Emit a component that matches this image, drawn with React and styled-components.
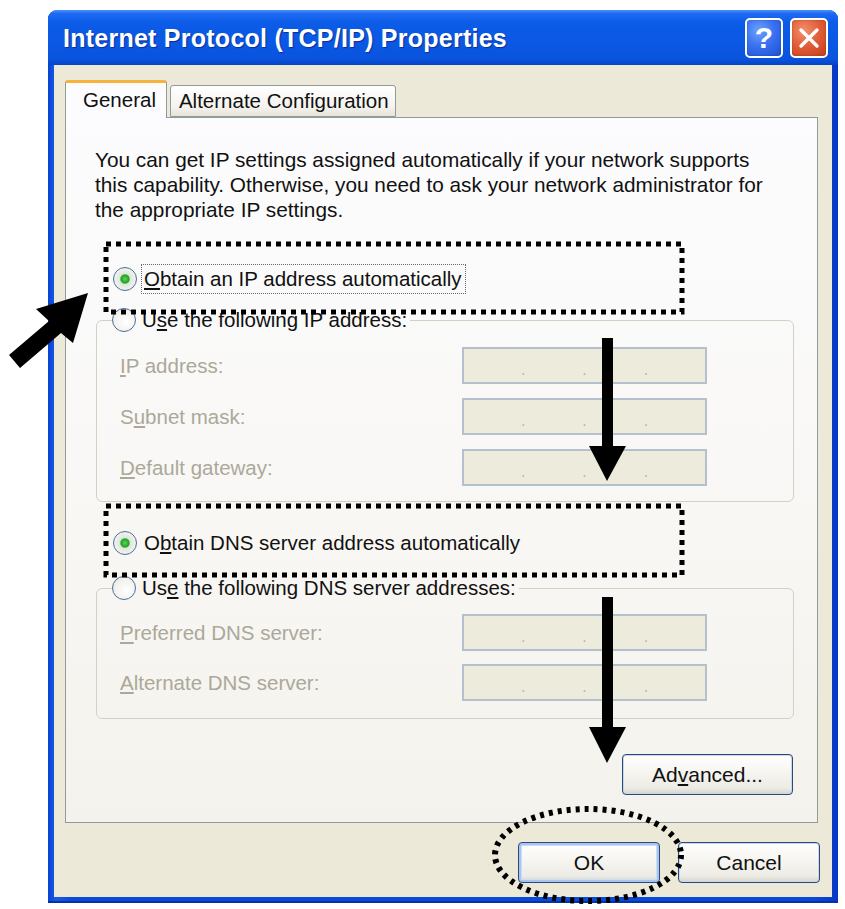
import React from 'react'
import styled, { createGlobalStyle } from 'styled-components'

const GlobalStyle = createGlobalStyle`
  html, body {
    margin: 0;
    padding: 0;
    background: #ffffff;
  }
  body {
    font-family: "Liberation Sans", Arial, sans-serif;
  }
  * {
    box-sizing: border-box;
  }
`

const Ul = styled.span`
  text-decoration: underline;
  text-underline-offset: 2px;
`

export default function App() {
  return (
    <Page>
      <GlobalStyle />
      <Window>
        <TitleBar>
          <Title>Internet Protocol (TCP/IP) Properties</Title>
          <Controls>
            <CaptionButton>?</CaptionButton>
            <CaptionButton $close>
              <svg width="22" height="22" viewBox="0 0 22 22">
                <path d="M3 3 L19 19 M19 3 L3 19" stroke="#fff" strokeWidth="3.4" strokeLinecap="round" />
              </svg>
            </CaptionButton>
          </Controls>
        </TitleBar>

        <Body>
          <TabStrip>
            <Tab $active>General</Tab>
            <Tab>Alternate Configuration</Tab>
          </TabStrip>

          <Panel>
            <Description>
              You can get IP settings assigned automatically if your network supports<br />
              this capability. Otherwise, you need to ask your network administrator for<br />
              the appropriate IP settings.
            </Description>

            <RadioRow $first>
              <Radio $checked />
              <FocusLabel><Ul>O</Ul>btain an IP address automatically</FocusLabel>
            </RadioRow>

            <Group>
              <Legend>
                <Radio />
                <span>U<Ul>s</Ul>e the following IP address:</span>
              </Legend>
              <Fields>
                <FieldLabel><Ul>I</Ul>P address:</FieldLabel>
                <IpField />
                <FieldLabel>S<Ul>u</Ul>bnet mask:</FieldLabel>
                <IpField />
                <FieldLabel><Ul>D</Ul>efault gateway:</FieldLabel>
                <IpField />
              </Fields>
            </Group>

            <RadioRow>
              <Radio $checked />
              <PlainLabel>O<Ul>b</Ul>tain DNS server address automatically</PlainLabel>
            </RadioRow>

            <Group $dns>
              <Legend>
                <Radio />
                <span>Us<Ul>e</Ul> the following DNS server addresses:</span>
              </Legend>
              <Fields $dns>
                <FieldLabel><Ul>P</Ul>referred DNS server:</FieldLabel>
                <IpField />
                <FieldLabel><Ul>A</Ul>lternate DNS server:</FieldLabel>
                <IpField />
              </Fields>
            </Group>

            <PanelActions>
              <XpButton $wide>Ad<Ul>v</Ul>anced...</XpButton>
            </PanelActions>
          </Panel>

          <Footer>
            <XpButton $default>OK</XpButton>
            <XpButton>Cancel</XpButton>
          </Footer>
        </Body>
      </Window>

      <Annotations width="845" height="909" viewBox="0 0 845 909">
        <rect x="106" y="244" width="576" height="68" fill="none" stroke="#000" strokeWidth="5" strokeDasharray="5 5" />
        <rect x="106" y="506" width="576" height="69" fill="none" stroke="#000" strokeWidth="5" strokeDasharray="5 5" />
        <ellipse cx="588" cy="855" rx="93" ry="46" fill="none" stroke="#000" strokeWidth="6" strokeDasharray="4 5" />
        <polygon points="88,293 36,309 49,321 9,355 20,368 61,333 73,343" fill="#000" />
        <rect x="602" y="338" width="11" height="110" fill="#000" />
        <polygon points="589,446 626,446 607,481" fill="#000" />
        <rect x="602" y="597" width="11" height="132" fill="#000" />
        <polygon points="589,727 626,727 607,763" fill="#000" />
      </Annotations>
    </Page>
  )
}

const IpField = () => (
  <IpBox>
    <IpDot>.</IpDot>
    <IpDot>.</IpDot>
    <IpDot>.</IpDot>
  </IpBox>
)

const Page = styled.div`
  position: relative;
  width: 845px;
  height: 909px;
  padding: 10px 0 0 48px;
  overflow: hidden;
`

const Window = styled.div`
  width: 790px;
  height: 893px;
  display: flex;
  flex-direction: column;
  background: linear-gradient(90deg, #0843d4 0%, #1a5ae6 1%, #0a4ad8 3%, #0a4ad8 97%, #0838c4 100%);
  border-radius: 9px 9px 0 0;
  overflow: hidden;
  box-shadow: inset 0 -2px 0 #0632a8;
`

const TitleBar = styled.div`
  height: 55px;
  flex: none;
  display: flex;
  align-items: center;
  justify-content: space-between;
  padding: 0 10px 0 15px;
  background: linear-gradient(180deg, #4a92ff 0%, #1f6cf2 6%, #0c5ce8 22%, #0a58e4 60%, #0a54de 88%, #0544c8 100%);
`

const Title = styled.div`
  color: #ffffff;
  font-family: "Liberation Sans", Arial, sans-serif;
  font-weight: bold;
  font-size: 25px;
  letter-spacing: 0.25px;
  text-shadow: 1px 1px 1px #0a2f9a;
  margin-top: 2px;
`

const Controls = styled.div`
  display: flex;
  gap: 7px;
  margin-top: 1px;
`

const CaptionButton = styled.div`
  width: 38px;
  height: 40px;
  border: 2px solid #ffffff;
  border-radius: 5px;
  display: flex;
  align-items: center;
  justify-content: center;
  color: #ffffff;
  font-family: "Liberation Sans", Arial, sans-serif;
  font-weight: bold;
  font-size: 30px;
  background: ${(p) =>
    p.$close
      ? 'radial-gradient(circle at 35% 30%, #f4906e 0%, #e2603a 45%, #c43c18 100%)'
      : 'radial-gradient(circle at 35% 30%, #6ea2ff 0%, #3a72f0 45%, #1c4fd4 100%)'};
  box-shadow: inset 0 0 2px rgba(0, 0, 0, 0.25);
`

const Body = styled.div`
  flex: 1;
  margin: 0 6px 6px;
  background: #ece9d8;
  padding: 15px 14px 0 11px;
  display: flex;
  flex-direction: column;
`

const TabStrip = styled.div`
  display: flex;
  align-items: flex-end;
  gap: 3px;
  height: 37px;
  position: relative;
  z-index: 1;
`

const Tab = styled.div`
  height: ${(p) => (p.$active ? '38px' : '32px')};
  margin-bottom: ${(p) => (p.$active ? '-1px' : '0')};
  padding: ${(p) => (p.$active ? '5px 10px 0 17px' : '3px 6px 0 8px')};
  font-size: 20.5px;
  color: #111111;
  border: 1px solid #919b9c;
  border-bottom: ${(p) => (p.$active ? 'none' : '1px solid #919b9c')};
  border-top: ${(p) => (p.$active ? '3px solid #f7b33a' : '1px solid #919b9c')};
  border-radius: 3px 3px 0 0;
  background: ${(p) => (p.$active ? '#fcfcfe' : 'linear-gradient(180deg, #ffffff 0%, #f4f3ef 70%, #e6e3d8 100%)')};
  white-space: nowrap;
`

const Panel = styled.div`
  height: 706px;
  border: 1px solid #919b9c;
  background: linear-gradient(180deg, #fcfcfe 0%, #f8f7f4 60%, #f3f2ec 100%);
  padding: 29px 23px 0 29px;
  display: flex;
  flex-direction: column;
`

const Description = styled.p`
  margin: 0;
  font-size: 20.8px;
  line-height: 25px;
  color: #111111;
  white-space: nowrap;
`

const RadioRow = styled.div`
  display: flex;
  align-items: center;
  gap: 6px;
  height: 30px;
  margin-top: ${(p) => (p.$first ? '42px' : '26px')};
  margin-left: 18px;
  font-size: 20.5px;
  color: #111111;
`

const Radio = styled.span`
  width: 24px;
  height: 24px;
  flex: none;
  border-radius: 50%;
  border: 1.5px solid #4b6f96;
  background: ${(p) =>
    p.$checked
      ? 'radial-gradient(circle, #5fd35f 0%, #21a121 26%, #dbe8d8 34%, #eef0ea 60%, #f7f7f4 100%)'
      : 'radial-gradient(circle at 60% 60%, #ffffff 0%, #f2f1ec 60%, #dedbd0 100%)'};
`

const FocusLabel = styled.span`
  outline: 1px dotted #6a6a6a;
  outline-offset: 1px;
  padding: 0 2px 0 1px;
  line-height: 26px;
`

const PlainLabel = styled.span`
  padding: 0 2px 0 1px;
`

const Group = styled.fieldset`
  margin: ${(p) => (p.$dns ? '15px' : '11px')} 0 0 1px;
  padding: 0;
  width: 698px;
  border: 1px solid #d3d1c4;
  border-radius: 6px;
  min-inline-size: 0;
`

const Legend = styled.legend`
  display: flex;
  align-items: center;
  gap: 6px;
  height: 30px;
  margin-left: 15px;
  padding: 0 3px 0 0;
  font-size: 20.5px;
  color: #111111;
`

const Fields = styled.div`
  display: grid;
  grid-template-columns: 342px 245px;
  row-gap: ${(p) => (p.$dns ? '13px' : '14px')};
  align-items: center;
  padding: ${(p) => (p.$dns ? '11px 0 17px 23px' : '12px 0 15px 23px')};
`

const FieldLabel = styled.div`
  font-size: 20.5px;
  color: #aca899;
`

const IpBox = styled.div`
  height: 37px;
  border: 2px solid #b5c0cf;
  background: #ecebdc;
  display: flex;
  justify-content: space-evenly;
  align-items: flex-end;
  padding-bottom: 6px;
`

const IpDot = styled.span`
  color: #b9b6a8;
  font-size: 16px;
  line-height: 12px;
`

const PanelActions = styled.div`
  display: flex;
  justify-content: flex-end;
  margin-top: 35px;
  padding-right: 1px;
`

const XpButton = styled.div`
  width: ${(p) => (p.$wide ? '171px' : '142px')};
  height: 41px;
  display: flex;
  align-items: center;
  justify-content: center;
  font-size: 21px;
  color: #111111;
  border: 1.5px solid #2c4a78;
  border-radius: 4px;
  background: linear-gradient(180deg, #ffffff 0%, #f7f6f2 40%, #ecebe5 85%, #d8d4c8 100%);
  box-shadow: ${(p) =>
    p.$default
      ? 'inset 0 0 0 2px #a8c4f2, inset 0 0 0 3px #cfdcf6'
      : 'inset 0 0 0 1px #c9d7ee'};
`

const Footer = styled.div`
  display: flex;
  justify-content: flex-end;
  gap: 18px;
  margin-top: 19px;
  margin-right: -2px;
`

const Annotations = styled.svg`
  position: absolute;
  left: 0;
  top: 0;
  pointer-events: none;
`
